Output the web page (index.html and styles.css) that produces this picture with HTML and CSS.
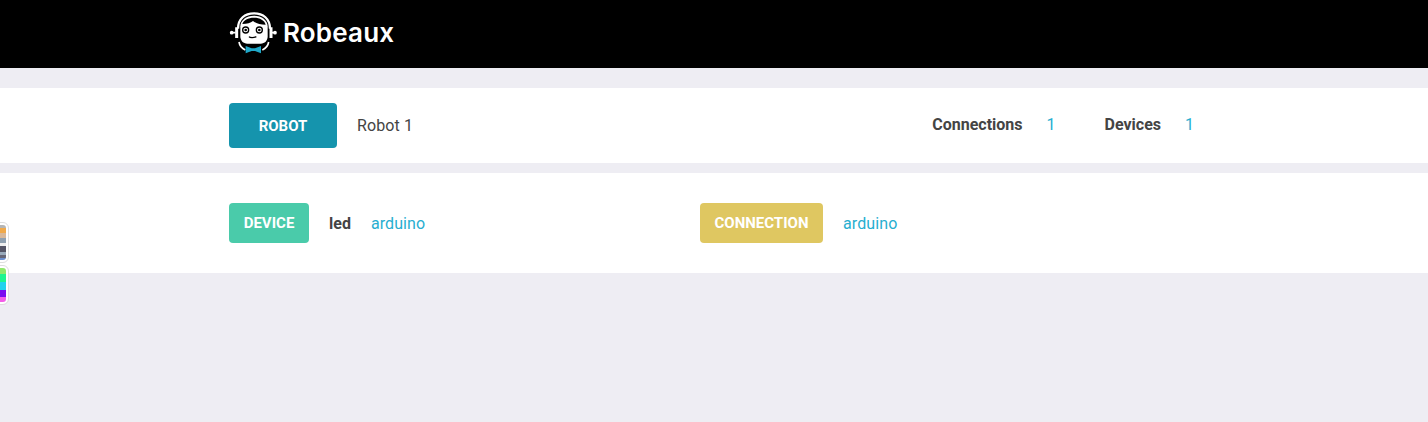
FILE: index.html
```html
<!DOCTYPE html>
<html lang="en">
<head>
  <meta charset="UTF-8" />
  <title>Robeaux</title>
  <link rel="stylesheet" href="styles.css">
</head>
<body>
  <header class="topbar">
    <div class="container brand">
      <svg class="logo" width="52" height="50" viewBox="0 0 156 150" fill="none">
        <path d="M39 62C39 32 60 16 87 16s48 16 48 46" stroke="#fff" stroke-width="7"/>
        <path d="M46 55c0-18 18-32 41-32s41 14 41 32v30c0 14-9 22-21 22H67c-12 0-21-8-21-22z" fill="#fff"/>
        <path d="M52 48c3-11 17-19 35-19s32 8 35 21c-15 0-29-3-38-11-7 6-18 9-32 9z" fill="#000"/>
        <circle cx="62" cy="66" r="9" stroke="#000" stroke-width="4"/>
        <circle cx="103" cy="66" r="9" stroke="#000" stroke-width="4"/>
        <circle cx="62" cy="66" r="4" fill="#000"/>
        <circle cx="103" cy="66" r="4" fill="#000"/>
        <path d="M72 86c3 4 14 4 22 0" stroke="#000" stroke-width="4"/>
        <path d="M35 58v32M138 58v32" stroke="#fff" stroke-width="9"/>
        <path d="M18 74h14M141 74h10" stroke="#fff" stroke-width="5"/>
        <circle cx="20" cy="74" r="5.500" fill="#fff"/>
        <circle cx="150" cy="74" r="5.500" fill="#fff"/>
        <path d="M42 102c2 12 8 19 19 24M131 102c-2 12-8 19-19 24" stroke="#fff" stroke-width="5"/>
        <path d="M62 114l18 7h10l18-7v22l-18-7H80l-18 7z" fill="#1fa8c9"/>
      </svg>
      <span class="brand-name">Robeaux</span>
    </div>
  </header>

  <section class="panel robot-panel">
    <div class="container robot-row">
      <div class="robot-info">
        <span class="tag tag-robot">ROBOT</span>
        <span class="robot-name">Robot 1</span>
      </div>
      <div class="stats">
        <span class="stat-label">Connections</span>
        <span class="stat-value">1</span>
        <span class="stat-label stat-devices">Devices</span>
        <span class="stat-value">1</span>
      </div>
    </div>
  </section>

  <section class="panel detail-panel">
    <div class="container detail-row">
      <div class="detail">
        <span class="tag tag-device">DEVICE</span>
        <span class="detail-name">led</span>
        <span class="link">arduino</span>
      </div>
      <div class="detail">
        <span class="tag tag-connection">CONNECTION</span>
        <span class="link">arduino</span>
      </div>
    </div>
  </section>

  <div class="swatch swatch-muted"></div>
  <div class="swatch swatch-bright"></div>
</body>
</html>
```

FILE: styles.css
```css
html, body {
  height: 100%;
}

body {
  font-family: Roboto, "Liberation Sans", sans-serif;
  background-color: #eeedf3;
  margin: 0;
  color: #444;
  font-size: 16px;
  overflow: hidden;
}

.container {
  width: 970px;
  margin: 0 auto;
  display: flex;
  align-items: center;
}

.topbar {
  background-color: #000;
  height: 68px;
}

.brand {
  height: 68px;
}

.logo {
  margin-left: -4px;
  margin-top: -2px;
}

.brand-name {
  font-family: Inter, sans-serif;
  font-size: 26px;
  font-weight: 600;
  letter-spacing: 0.2px;
  color: #fff;
  margin-left: 6px;
  margin-top: -4px;
}

.panel {
  background-color: #fff;
}

.robot-panel {
  margin-top: 20px;
  height: 75px;
}

.detail-panel {
  margin-top: 10px;
  height: 100px;
}

.robot-row {
  height: 75px;
  justify-content: space-between;
}

.detail-row {
  height: 100px;
}

.robot-info,
.detail,
.stats {
  display: flex;
  align-items: center;
}

.detail {
  width: 471px;
}

.tag {
  display: flex;
  align-items: center;
  justify-content: center;
  color: #fff;
  font-weight: 700;
  font-size: 15px;
  border-radius: 4px;
  height: 40px;
}

.tag-robot {
  background-color: #1594ad;
  width: 108px;
  height: 45px;
}

.tag-device {
  background-color: #4acbaa;
  width: 80px;
}

.tag-connection {
  background-color: #dfc761;
  width: 123px;
}

.robot-name {
  margin-left: 20px;
  letter-spacing: 0.1px;
}

.stats {
  margin-right: 5px;
  margin-top: -2px;
}

.stat-label {
  font-weight: 700;
}

.stat-value {
  color: #27aed0;
  margin-left: 24px;
}

.stat-devices {
  margin-left: 49px;
}

.detail-name {
  font-weight: 700;
  margin-left: 20px;
}

.link {
  color: #27aed0;
  margin-left: 20px;
  letter-spacing: 0.1px;
}

/* stacked colour strips poking in from the left edge */
.swatch {
  position: absolute;
  left: -10px;
  width: 14px;
  border: 2px solid #fff;
  outline: 1px solid #ddd;
  border-radius: 5px;
}

.swatch-muted {
  top: 223px;
  height: 35px;
  background: linear-gradient(#b5b5b5 0 3px, #f0a94a 3px 8px, #d8b89a 8px 13px, #8fa0b0 13px 18px, #eee 18px 21px, #556 21px 27px, #9ab 27px 30px, #667 30px 33px, #6a8fd0 33px);
}

.swatch-bright {
  top: 266px;
  height: 34px;
  background: linear-gradient(#8fe86a 0 6px, #1df58f 6px 14px, #22d3ee 14px 22px, #7a0cf0 22px 29px, #f35ee8 29px);
}
```
